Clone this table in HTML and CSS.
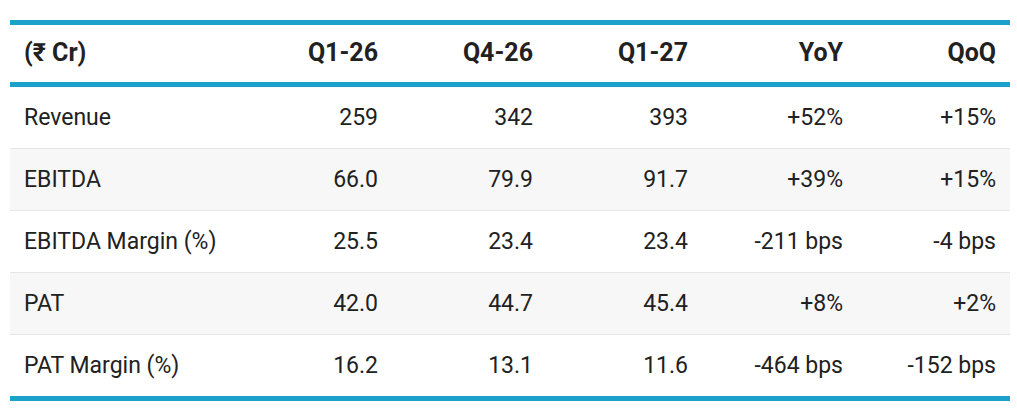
FILE: index.html
```html
<!DOCTYPE html>
<html>
<head>
<meta charset="utf-8">
<link rel="stylesheet" href="styles.css">
</head>
<body>
<table class="fin">
  <colgroup>
    <col class="c-label">
    <col class="c-num"><col class="c-num"><col class="c-num"><col class="c-num"><col class="c-last">
  </colgroup>
  <thead>
    <tr>
      <th class="lbl">(₹ Cr)</th>
      <th>Q1-26</th>
      <th>Q4-26</th>
      <th>Q1-27</th>
      <th>YoY</th>
      <th>QoQ</th>
    </tr>
  </thead>
  <tbody>
    <tr><td class="lbl">Revenue</td><td>259</td><td>342</td><td>393</td><td>+52%</td><td>+15%</td></tr>
    <tr><td class="lbl">EBITDA</td><td>66.0</td><td>79.9</td><td>91.7</td><td>+39%</td><td>+15%</td></tr>
    <tr><td class="lbl">EBITDA Margin (%)</td><td>25.5</td><td>23.4</td><td>23.4</td><td>-211 bps</td><td>-4 bps</td></tr>
    <tr><td class="lbl">PAT</td><td>42.0</td><td>44.7</td><td>45.4</td><td>+8%</td><td>+2%</td></tr>
    <tr><td class="lbl">PAT Margin (%)</td><td>16.2</td><td>13.1</td><td>11.6</td><td>-464 bps</td><td>-152 bps</td></tr>
  </tbody>
</table>
</body>
</html>
```

FILE: styles.css
```css
html, body {
  margin: 0;
  padding: 0;
  background: #ffffff;
}
body {
  padding: 20px 0 0 10px;
  font-family: Roboto, "Liberation Sans", sans-serif;
  color: #212121;
}
.fin {
  width: 1000px;
  border-collapse: collapse;
  table-layout: fixed;
  border-top: 5px solid #1aa1cc;
  border-bottom: 5px solid #1aa1cc;
  font-size: 23px;
}
.c-label { width: 227px; }
.c-num { width: 155px; }
.c-last { width: 153px; }
.fin th, .fin td {
  text-align: right;
  padding: 0 14px;
  white-space: nowrap;
}
.fin th {
  font-size: 25px;
  font-weight: 700;
  line-height: 26px;
  padding-top: 15px;
  padding-bottom: 16px;
  border-bottom: 5px solid #1aa1cc;
}
.fin td {
  font-weight: 400;
  line-height: 25px;
  padding-top: 18px;
  padding-bottom: 18px;
  border-bottom: 1px solid #e6e6e6;
}
.fin tbody tr:last-child td { border-bottom: none; }
.fin tbody tr:nth-child(even) td { background: #f7f7f7; }
.fin .lbl { text-align: left; }
```
